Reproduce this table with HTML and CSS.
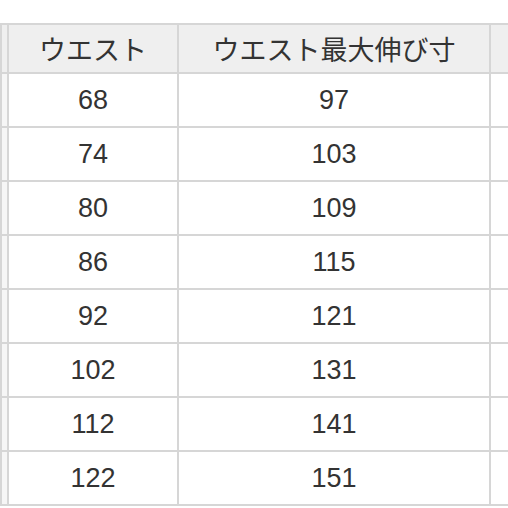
FILE: index.html
```html
<!DOCTYPE html>
<html lang="ja">
<head>
<meta charset="utf-8">
<link rel="stylesheet" href="styles.css">
</head>
<body>
<div class="page">
<table class="size-table">
  <colgroup>
    <col class="c-edge"><col class="c-waist"><col class="c-max"><col class="c-rest">
  </colgroup>
  <thead>
    <tr><th></th><th>ウエスト</th><th>ウエスト最大伸び寸</th><th></th></tr>
  </thead>
  <tbody>
    <tr><td></td><td>68</td><td>97</td><td></td></tr>
    <tr><td></td><td>74</td><td>103</td><td></td></tr>
    <tr><td></td><td>80</td><td>109</td><td></td></tr>
    <tr><td></td><td>86</td><td>115</td><td></td></tr>
    <tr><td></td><td>92</td><td>121</td><td></td></tr>
    <tr><td></td><td>102</td><td>131</td><td></td></tr>
    <tr><td></td><td>112</td><td>141</td><td></td></tr>
    <tr><td></td><td>122</td><td>151</td><td></td></tr>
  </tbody>
</table>
</div>
</body>
</html>
```
FILE: styles.css
```css
html, body {
  margin: 0;
  padding: 0;
  background: #ffffff;
  overflow: hidden;
}
.page {
  width: 508px;
  height: 508px;
  overflow: hidden;
  padding-top: 23px;
  box-sizing: border-box;
}
.size-table {
  border-collapse: separate;
  border-spacing: 2px;
  background: #d6d6d6;
  table-layout: fixed;
  width: 593px;
  margin: 0;
  font-family: "Liberation Sans", "Noto Sans CJK JP", sans-serif;
  color: #333333;
}
.c-edge { width: 5px; }
.c-waist { width: 168px; }
.c-max { width: 310px; }
.c-rest { width: 100px; }
.size-table th,
.size-table td {
  padding: 0;
  text-align: center;
  vertical-align: middle;
}
.size-table th {
  height: 47px;
  background: #efefef;
  font-family: "Noto Sans CJK JP", sans-serif;
  font-weight: 400;
  font-size: 27px;
  line-height: 1;
  color: #333333;
}
.size-table td {
  height: 52px;
  background: #ffffff;
  font-size: 27px;
  line-height: 1;
}
.size-table td:first-child {
  background: #f6f6f6;
}
```
